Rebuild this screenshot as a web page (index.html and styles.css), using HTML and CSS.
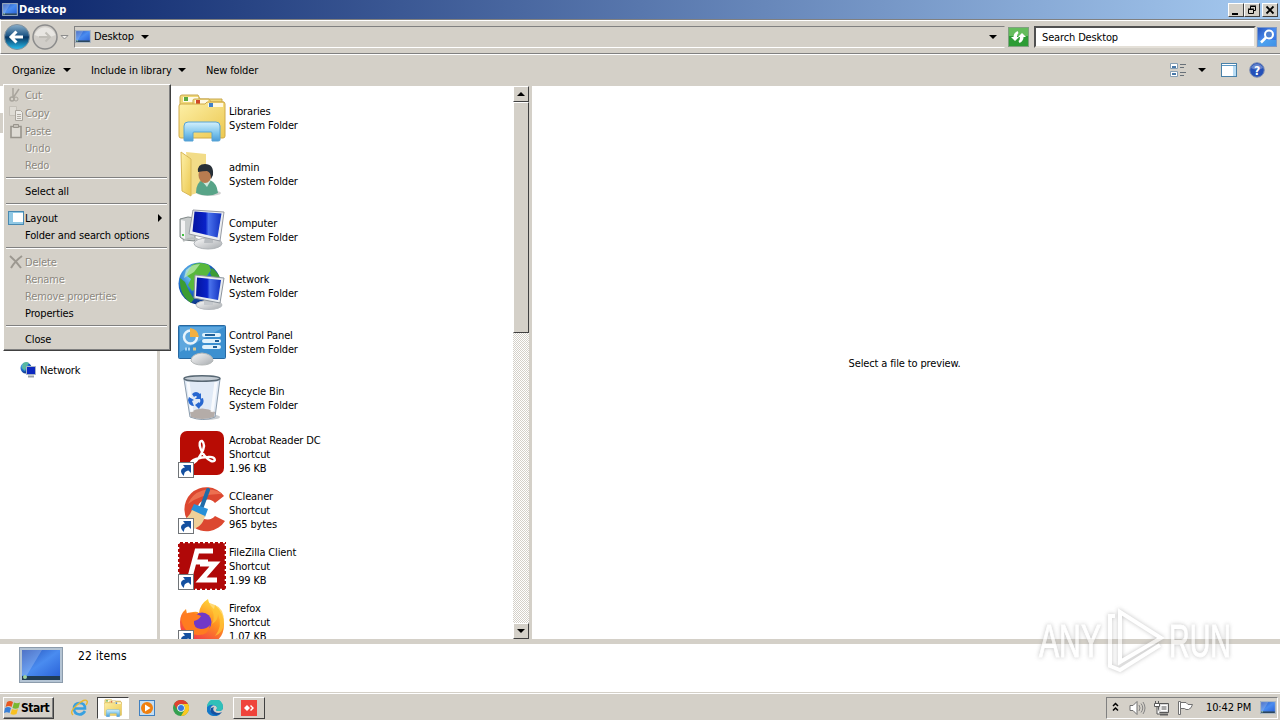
FILE: index.html
```html
<!DOCTYPE html>
<html lang="en">
<head>
    <meta charset="UTF-8">
    <meta name="viewport" content="width=device-width, initial-scale=1.0">
    <title>Desktop</title>
    <link rel="stylesheet" href="styles.css">
</head>
<body>

<!-- shared icons -->
<svg class="defs" width="0" height="0">
  <defs>
    <linearGradient id="blue" x1="0" y1="0" x2="1" y2="1">
      <stop offset="0" stop-color="#2450b8"/><stop offset=".5" stop-color="#4a8cf0"/><stop offset="1" stop-color="#2a62d8"/>
    </linearGradient>
    <linearGradient id="navy" x1="0" y1="0" x2="1" y2="0">
      <stop offset="0" stop-color="#0414a0"/><stop offset=".45" stop-color="#0a22c8"/><stop offset=".55" stop-color="#4a72ec"/><stop offset="1" stop-color="#1030c0"/>
    </linearGradient>
    <linearGradient id="yellow" x1="0" y1="0" x2="1" y2="1">
      <stop offset="0" stop-color="#fdf0a8"/><stop offset="1" stop-color="#ecc850"/>
    </linearGradient>
    <linearGradient id="glass" x1="0" y1="0" x2="0" y2="1">
      <stop offset="0" stop-color="#d4f0fc"/><stop offset=".6" stop-color="#7cc4ec"/><stop offset="1" stop-color="#4c9cd8"/>
    </linearGradient>
    <linearGradient id="silver" x1="0" y1="0" x2="1" y2="1">
      <stop offset="0" stop-color="#fafafa"/><stop offset="1" stop-color="#a8acb0"/>
    </linearGradient>
    <radialGradient id="globe" cx=".35" cy=".3" r=".75">
      <stop offset="0" stop-color="#8ce0f8"/><stop offset=".5" stop-color="#2070d0"/><stop offset="1" stop-color="#082878"/>
    </radialGradient>
    <linearGradient id="back" x1="0" y1="0" x2="0" y2="1">
      <stop offset="0" stop-color="#8ab0cc"/><stop offset=".45" stop-color="#1c5484"/><stop offset=".5" stop-color="#083460"/><stop offset="1" stop-color="#28c0f0"/>
    </linearGradient>
    <linearGradient id="fox" x1=".8" y1="0" x2=".3" y2="1">
      <stop offset="0" stop-color="#ffe040"/><stop offset=".45" stop-color="#ff9020"/><stop offset="1" stop-color="#f02850"/>
    </linearGradient>
  </defs>
  <symbol id="desktop" viewBox="0 0 44 36">
    <rect x="0.5" y="0.5" width="43" height="35" fill="#b4c4d4" stroke="#8c9cac"/>
    <rect x="3" y="3" width="38" height="27" fill="url(#blue)"/>
    <path d="M3 3h20L8 28H3z" fill="#fff" opacity=".2"/>
    <rect x="3" y="29" width="38" height="4" fill="#203c54"/>
    <circle cx="6" cy="30" r="2" fill="#9cd0a0"/>
  </symbol>
  <symbol id="libraries" viewBox="0 0 48 48">
    <path d="M2 8V3q0-2 2-2h16l2 4h22v8H2z" fill="#f0d878" stroke="#c8a850"/>
    <rect x="5" y="3" width="15" height="5" fill="#fffbe8"/><rect x="6" y="3" width="4" height="4" fill="#58a840"/>
    <path d="M15 10V6q0-1 2-1h14l2 3h13v6H15z" fill="#f6e088" stroke="#c8a850"/>
    <rect x="17" y="6" width="13" height="4" fill="#fff8e0"/><rect x="18" y="6" width="4" height="4" fill="#d04828"/>
    <path d="M1 12q0-2 2-2h24l2-2h16q2 0 2 2v32q0 2-2 2H3q-2 0-2-2z" fill="url(#yellow)" stroke="#d0aa48"/>
    <rect x="30" y="9" width="15" height="4" fill="#fff8e0"/><rect x="31" y="9" width="4" height="4" fill="#4080c8"/>
    <path d="M6 32q0-4 4-4h28q4 0 4 4v14q0 1-2 1h-6V39q0-1-1-1H16q-1 0-1 1v8H7q-1 0-1-1z" fill="url(#glass)" stroke="#58a4d4"/>
  </symbol>
  <symbol id="network" viewBox="0 0 48 48">
    <circle cx="21.500" cy="21.500" r="21" fill="url(#globe)"/>
    <path d="M14 3q8-4 17 0l2 5-5 7-7 4-1 7-6 3-4-6 3-6-5-4z" fill="#58b83c"/>
    <path d="M34 6q8 6 9 14l-8-3-3-6zM2 16l5 4 4 9 5 8-3 4Q1 33 2 16z" fill="#3c9c34"/>
    <path d="M8 8q6-6 14-6l-6 8-10 6z" fill="#d8f8d0" opacity=".6"/>
    <ellipse cx="31" cy="43" rx="13" ry="4.500" fill="url(#silver)" stroke="#b8bcc0"/>
    <path d="M26 36h9v7h-9z" fill="#c4c8cc"/>
    <path d="M17 13l29 3-4 25-26-5z" fill="#e8ecf0" stroke="#8c949c"/>
    <path d="M19 15.500l24 2.500-3 20-22-4z" fill="url(#navy)"/>
  </symbol>
  <symbol id="shortcut" viewBox="0 0 16 16">
    <rect x="0.500" y="0.500" width="15" height="15" fill="#fff" stroke="#707478"/>
    <path d="M6 14C1 10 3 6 7 5.500L5 3h8v8l-2.500-2.500C7 9 6 11 6 14z" fill="#1450a0"/>
  </symbol>
</svg>

<div class="titlebar">
  <svg class="title-icon" width="16" height="13"><use href="#desktop"/></svg>
  <span class="title">Desktop</span>
  <div class="window-buttons">
    <button class="win-btn"><svg width="12" height="10"><path d="M2 8h6v2H2z"/></svg></button>
    <button class="win-btn"><svg width="12" height="10"><path d="M4.500 5V1.500h5v4H8M4 1h6M2.500 4.500h5v4h-5zM2 4h6" fill="none" stroke="#000"/></svg></button>
    <button class="win-btn close"><svg width="12" height="10"><path d="M2.500 1.500l7 7M9.500 1.500l-7 7" stroke="#000" stroke-width="1.800"/></svg></button>
  </div>
</div>

<div class="address-row">
  <svg width="60" height="28" viewBox="0 0 60 28">
    <circle cx="14" cy="14" r="12.500" fill="url(#back)" stroke="#80909c"/>
    <path d="M8 14h12M13.500 8.500L8 14l5.500 5.500" fill="none" stroke="#fff" stroke-width="3"/>
    <circle cx="42" cy="14" r="12" fill="#d0cdc8" stroke="#8c8c8c" stroke-width="1.500"/>
    <path d="M31.500 12a11 11 0 0 1 21 0q-10 5-21 0z" fill="#e8e6e2"/>
    <path d="M36 14h11M42.500 9.500L47 14l-4.500 4.500" fill="none" stroke="#c0beb8" stroke-width="2"/>
  </svg>
  <svg class="history" width="9" height="6"><path d="M1 1.500h7L4.500 5z" fill="#f4f2ee" stroke="#8c8c8c"/></svg>
  <div class="address">
    <svg width="16" height="13"><use href="#desktop"/></svg>
    <span class="text">Desktop</span>
    <i class="down"></i>
    <i class="down right"></i>
  </div>
  <svg class="refresh" width="21" height="20" viewBox="0 0 21 20">
    <rect x="0.500" y="0.500" width="20" height="19" fill="#2c9c34" stroke="#80a080"/>
    <rect x="1" y="1" width="19" height="8" fill="#64bc5c"/>
    <path d="M7 14l-4-4h2.500q0-4 4-6l1 2Q9 7 9 10h2zM14 6l4 4h-2.500q0 4-4 6l-1-2q1.500-1 1.500-4h-2z" fill="#fff"/>
  </svg>
  <div class="search"><span class="text">Search Desktop</span></div>
  <svg width="20" height="20" viewBox="0 0 20 20">
    <rect x="0.500" y="0.500" width="19" height="19" fill="url(#blue)" stroke="#7c98c8"/>
    <path d="M1 13h18v6H1z" fill="#50b0f0" opacity=".6"/>
    <circle cx="12" cy="7.500" r="4" fill="#5080d0" stroke="#fff" stroke-width="2"/>
    <path d="M9 10.500L4 15.500" stroke="#fff" stroke-width="2.500"/>
  </svg>
</div>

<div class="toolbar">
  <span class="text organize">Organize</span><i class="down"></i>
  <span class="text include">Include in library</span><i class="down"></i>
  <span class="text newfolder">New folder</span>
  <div class="tools">
    <svg width="17" height="16" viewBox="0 0 17 16">
      <path d="M.5 1.500h7v5h-7zM.5 9.500h7v5h-7z" fill="#fff" stroke="#88a0b4"/>
      <path d="M2 4h4v2H2zM2 11h4v2H2z" fill="#4878a8"/>
      <path d="M10 2.500h6M10 5.500h4M10 10.500h6M10 13.500h4" stroke="#687078"/>
    </svg>
    <i class="down"></i>
    <svg class="preview-icon" width="16" height="14" viewBox="0 0 16 14">
      <rect x="0.500" y="0.500" width="15" height="13" fill="#fff" stroke="#4880a8"/>
      <path d="M1 2.500h14" stroke="#5c98c4"/><path d="M12 3h3v10h-3z" fill="#b8dcf4"/>
    </svg>
    <svg width="16" height="16" viewBox="0 0 16 16">
      <circle cx="8" cy="8" r="7.300" fill="#2450b8" stroke="#8090b4"/>
      <path d="M2 6a6.500 6.500 0 0 1 12 0q-6 3-12 0z" fill="#fff" opacity=".3"/>
      <text x="8" y="12.500" class="help">?</text>
    </svg>
  </div>
</div>

<div class="content">
  <div class="nav-pane">
    <div class="nav-edge"></div>
    <div class="nav-item">
      <svg width="16" height="16" viewBox="0 0 16 16">
        <circle cx="6" cy="6" r="5.500" fill="url(#globe)"/>
        <path d="M3 1q4-2 6 0L6 5 5 9 2 6z" fill="#58b8a0"/>
        <path d="M6.500 4.500h9v8h-9z" fill="#0c28c0" stroke="#a8b4c4"/>
        <path d="M8 14.500h6" stroke="#98a0a8" stroke-width="2"/>
      </svg>
      <span class="text">Network</span>
    </div>
  </div>

  <div class="file-list">
    <div class="file">
      <svg width="48" height="48"><use href="#libraries"/></svg>
      <div class="info"><p>Libraries</p><p>System Folder</p></div>
    </div>
    <div class="file">
      <svg width="48" height="48" viewBox="0 0 48 48">
        <ellipse cx="31" cy="43" rx="12" ry="3" fill="#d0d0d0"/>
        <path d="M8 2l20 2v36l-15 5z" fill="#f2dc88"/>
        <path d="M3 2l10 7v37L4 41z" fill="url(#yellow)" stroke="#d8b858"/>
        <path d="M18 43q0-11 7-13h7q7 3 8 13-10 5-22 0z" fill="#58a488"/>
        <path d="M23 30l6 7 4-7z" fill="#d0e8dc"/>
        <ellipse cx="27" cy="25" rx="6.500" ry="8" fill="#b87c50"/>
        <path d="M20 22q-1-8 7-8 9 0 8 11l-2 4q0-7-4-8-4 0-9 1z" fill="#283038"/>
      </svg>
      <div class="info"><p>admin</p><p>System Folder</p></div>
    </div>
    <div class="file">
      <svg width="48" height="48" viewBox="0 0 48 48">
        <path d="M2 13l8-2 7 1v23l-11-1-4-3z" fill="#c8cccc" stroke="#808888"/>
        <path d="M3 14l4 1v18l-4-2z" fill="#f4f4f4"/><path d="M4 28h2v2H4z" fill="#40c040"/>
        <path d="M5 35q9-5 16-1" fill="none" stroke="#b8bcbc" stroke-width="2"/>
        <ellipse cx="30" cy="37.500" rx="14" ry="5.500" fill="url(#silver)" stroke="#b0b4b8"/>
        <path d="M27 31h8v6h-9z" fill="#b8bcc0"/>
        <path d="M15 4l31 2-4 29-31-7z" fill="#eceef0" stroke="#989ca4"/>
        <path d="M16.500 5.500l27 2-4 24-25-6z" fill="url(#navy)"/>
      </svg>
      <div class="info"><p>Computer</p><p>System Folder</p></div>
    </div>
    <div class="file">
      <svg width="48" height="48"><use href="#network"/></svg>
      <div class="info"><p>Network</p><p>System Folder</p></div>
    </div>
    <div class="file">
      <svg width="48" height="48" viewBox="0 0 48 48">
        <rect x="0.500" y="7.500" width="47" height="33" rx="1" fill="#3c90d0" stroke="#2868a0"/>
        <path d="M2 9h44L2 34z" fill="#74b8e8" opacity=".6"/>
        <circle cx="12.500" cy="19" r="6.500" fill="none" stroke="#e8f4fc" stroke-width="2.500"/>
        <path d="M12 19V10q8 1 9 9z" fill="#f4b040"/>
        <path d="M26 17h15M26 23h15M26 29h15" stroke="#e0f2fc" stroke-width="4" stroke-linecap="round"/>
        <path d="M27 17h10M37 23h4M35 29h4" stroke="#206098" stroke-width="2"/>
        <path d="M7 31h6" stroke="#b0d8f4" stroke-width="3" stroke-dasharray="2 1"/><path d="M15 31h3" stroke="#d8c890" stroke-width="3"/>
        <path d="M13 43q0-7 11-8 11 1 11 8-3 4-11 4t-11-4z" fill="url(#silver)" stroke="#b4b8b8"/>
      </svg>
      <div class="info"><p>Control Panel</p><p>System Folder</p></div>
    </div>
    <div class="file">
      <svg width="48" height="48" viewBox="0 0 48 48">
        <ellipse cx="29" cy="43" rx="13" ry="3" fill="#c8ccd0"/>
        <path d="M6 5h36l-5 38q-12 5-25 0z" fill="#e0eaf6" stroke="#8c9cac"/>
        <path d="M12 38q12-7 25 0l-1 5q-12 4-23 0z" fill="#b4aca8"/>
        <path d="M10 8l4 30M38 8l-4 30" stroke="#fff" stroke-width="3" opacity=".8"/>
        <ellipse cx="24" cy="4.500" rx="18" ry="2.800" fill="#c4ccd4" stroke="#586874" stroke-width="1.500"/>
        <path d="M14 20q4-4 8 0l1-1v6h-6l2-2q-1-2-3 0zM11 23l5 3-2 1 2 5q-5 0-6-6zM22 25l3-1q2 6-3 9l-1 2-4-4 4-3v1q2-1 1-4z" fill="#2868d0"/>
      </svg>
      <div class="info"><p>Recycle Bin</p><p>System Folder</p></div>
    </div>
    <div class="file">
      <div class="icon">
        <svg width="48" height="48" viewBox="0 0 48 48">
          <rect x="2" y="1" width="44" height="44" rx="7" fill="#b80c04"/>
          <path d="M13 34c7-2 17-18 11-23-5-1-2 14 9 20 6 2 5-5-3-4-8 0-18 3-17 7z" fill="none" stroke="#fff" stroke-width="2.400" stroke-linejoin="round"/>
        </svg>
        <svg class="shortcut" width="16" height="16"><use href="#shortcut"/></svg>
      </div>
      <div class="info"><p>Acrobat Reader DC</p><p>Shortcut</p><p>1.96 KB</p></div>
    </div>
    <div class="file">
      <div class="icon">
        <svg width="48" height="48" viewBox="0 0 48 48">
          <path d="M46 10A22 22 0 1 0 47 35L37 30A10 10 0 1 1 37 17z" fill="#dc4830"/>
          <path d="M44 8A22 22 0 0 0 10 18q14-11 34-10z" fill="#ec7050"/>
          <path d="M30 4l-7 19" stroke="#206ca8" stroke-width="4" stroke-linecap="round"/>
          <path d="M16 18l14 5-3 8-14-7z" fill="#2890d8"/>
          <path d="M14 24l13 6q-3 13-17 14L2 36q9-4 12-12z" fill="#f0d098"/>
        </svg>
        <svg class="shortcut" width="16" height="16"><use href="#shortcut"/></svg>
      </div>
      <div class="info"><p>CCleaner</p><p>Shortcut</p><p>965 bytes</p></div>
    </div>
    <div class="file">
      <div class="icon">
        <svg width="48" height="48" viewBox="0 0 48 48">
          <rect width="48" height="48" fill="#b00808"/>
          <rect width="48" height="48" fill="none" stroke="#fff" stroke-width="2.500" stroke-dasharray="2 3"/>
          <path d="M12 35l7-26h16M16 20h14M22 22h15L23 38h16" fill="none" stroke="#fff" stroke-width="5"/>
        </svg>
        <svg class="shortcut" width="16" height="16"><use href="#shortcut"/></svg>
      </div>
      <div class="info"><p>FileZilla Client</p><p>Shortcut</p><p>1.99 KB</p></div>
    </div>
    <div class="file">
      <div class="icon">
        <svg width="48" height="48" viewBox="0 0 48 48">
          <path d="M2 24q0-8 6-13l1 5 6-2q4-1 6 1Q22 6 30 1q1 6 6 10l1-4q9 8 9 19 0 20-22 21Q2 46 2 24z" fill="url(#fox)"/>
          <circle cx="24" cy="24" r="9.500" fill="#7038c8"/>
          <path d="M3 20q6-7 13-5l7 3q-2 4-7 5-1 7 7 8 6 0 9-4-1 10-12 10Q5 36 3 20z" fill="#ff7c20"/>
          <path d="M29 4q10 12 5 22 6-3 6-10 5 12-3 22 9-4 9-14Q46 10 37 7z" fill="#ffc838" opacity=".7"/>
        </svg>
        <svg class="shortcut" width="16" height="16"><use href="#shortcut"/></svg>
      </div>
      <div class="info"><p>Firefox</p><p>Shortcut</p><p>1.07 KB</p></div>
    </div>
  </div>

  <div class="scrollbar">
    <div class="scroll-btn"><i class="down up"></i></div>
    <div class="thumb"></div>
    <div class="scroll-btn bottom"><i class="down"></i></div>
  </div>

  <div class="preview"><span class="text">Select a file to preview.</span></div>
</div>

<div class="details">
  <svg width="44" height="36"><use href="#desktop"/></svg>
  <span class="text">22 items</span>
</div>

<div class="taskbar">
  <button class="start">
    <svg width="17" height="16" viewBox="0 0 17 16">
      <path d="M3 2q3-2 6 0L7.500 7Q5 5 1.500 7z" fill="#e85820"/>
      <path d="M10 2.500q3 1.500 6 0L14.500 8q-3 1.500-6 0z" fill="#78b830"/>
      <path d="M1 8q3-2 6 0l-1.500 5Q3 11.500 0 13z" fill="#3880d8"/>
      <path d="M8 9q3 1.500 6 0l-1.500 5q-3 1.500-6 0z" fill="#f8c020"/>
    </svg>
    <span class="start-text">Start</span>
  </button>
  <div class="task ie">
    <svg width="18" height="18" viewBox="0 0 18 18">
      <path d="M15 12q-2 3.500-5.500 3.500Q4 15 4 9.500 4 4 9.500 4T15 9.500H5" fill="none" stroke="#38a0e0" stroke-width="2.600"/>
      <path d="M3 16Q-1 13 7 6t10-4q1 1-1 4" fill="none" stroke="#e8b830" stroke-width="1.400"/>
    </svg>
  </div>
  <div class="task pressed"><svg width="18" height="18"><use href="#libraries"/></svg></div>
  <div class="task">
    <svg width="16" height="16" viewBox="0 0 16 16">
      <rect x="0.500" y="0.500" width="15" height="15" fill="#c4def4" stroke="#4080c0"/>
      <circle cx="8" cy="8" r="6" fill="#f08010"/><path d="M6 4.500l5.500 3.500L6 11.500z" fill="#fff"/>
    </svg>
  </div>
  <div class="task">
    <svg width="16" height="16" viewBox="0 0 16 16">
      <circle cx="8" cy="8" r="8" fill="#34a050"/>
      <path d="M1 4a8 8 0 0 1 14 0H8a4 4 0 0 0-3.500 6z" fill="#e04030"/>
      <path d="M15 4a8 8 0 0 1-7 12l3.500-6A4 4 0 0 0 8 4z" fill="#fcc820"/>
      <circle cx="8" cy="8" r="3.800" fill="#fff"/><circle cx="8" cy="8" r="3" fill="#3878e0"/>
    </svg>
  </div>
  <div class="task">
    <svg width="16" height="16" viewBox="0 0 16 16">
      <path d="M0 8a8 8 0 0 1 16-1q0 4-4 4-3 0-3-1 2-2 0-4-3-2-5 1-2 5 4 7 3 1 6-1-3 4-8 3-6-1-7-8z" fill="#1478c8"/>
      <path d="M0 7a8 8 0 0 1 16 0q0 4-4 4-3 0-3-1 2-2 0-4Q4 3 0 7z" fill="#30c0b8"/>
      <path d="M4 8q-2 6 5 7 4 0 6-3-4 2-7 0-3-2-1-5z" fill="#1450a0"/>
    </svg>
  </div>
  <div class="task raised">
    <svg width="16" height="16" viewBox="0 0 16 16">
      <rect width="16" height="16" fill="#ef443b"/>
      <path d="M6 5L9 8 6 11 3 8z" fill="#fff"/><path d="M10 5l3 3-3 3-1-1 2-2-2-2z" fill="#fff"/>
    </svg>
  </div>

  <div class="tray">
    <svg width="8" height="12" viewBox="0 0 8 12"><path d="M1 4l2.500-2.500L6 4M1 8.500L3.500 6 6 8.500" fill="none" stroke="#000" stroke-width="1.500"/></svg>
    <svg class="speaker" width="17" height="16" viewBox="0 0 17 16">
      <path d="M1 5.500h3l4-4v13l-4-4H1z" fill="#fff" stroke="#707070"/>
      <path d="M10 5q2 3 0 6M12 3.500q3.500 4.500 0 9M14 2q4 6 0 12" fill="none" stroke="#848484"/>
    </svg>
    <svg class="lan" width="17" height="16" viewBox="0 0 17 16">
      <path d="M6 3.500h9.500v9H5z" fill="#d8d8d8" stroke="#585858"/><path d="M8 5.500h6v5H8z" fill="#a8a8a8" stroke="#fff"/>
      <path d="M7 14.500h8" stroke="#606060" stroke-width="2"/>
      <path d="M1.500 3.500h5v3h-5zM2.500 1v2M5.500 1v2M4 7v7h3" fill="#fff" stroke="#585858"/>
    </svg>
    <svg class="flag" width="17" height="16" viewBox="0 0 17 16">
      <path d="M1.500 1.500h2v13h-2z" fill="#fff" stroke="#707070"/>
      <path d="M3.500 2.500H9l2 2h4.500q-1 4-4 5H9l-1.500-1h-4z" fill="#fff" stroke="#707070"/>
    </svg>
    <span class="text clock">10:42 PM</span>
    <svg width="16" height="13"><use href="#desktop"/></svg>
  </div>
</div>

<!-- Organize menu -->
<div class="menu">
  <div class="item tall disabled">
    <svg width="16" height="16" viewBox="0 0 16 16"><path d="M5 1v9M11 2L5 11" stroke="#a8a49c" stroke-width="1.500"/><circle cx="4" cy="12" r="2" fill="none" stroke="#a8a49c" stroke-width="1.500"/><circle cx="8" cy="12" r="2" fill="none" stroke="#a8a49c"/></svg>
    <span class="text">Cut</span>
  </div>
  <div class="item tall disabled">
    <svg width="16" height="16" viewBox="0 0 16 16"><path d="M1.500 1.500h7v9h-7z" fill="#dedbd4" stroke="#c4c0b8"/><path d="M7.500 5.500h5l2 2v8h-7z" fill="#eceae6" stroke="#a8a49c"/><path d="M9 9.500h4M9 11.500h4M9 13.500h4" stroke="#b0aca4"/></svg>
    <span class="text">Copy</span>
  </div>
  <div class="item tall disabled">
    <svg width="16" height="16" viewBox="0 0 16 16"><path d="M3 3.500h10v11H3z" fill="#dedbd4" stroke="#98948c" stroke-width="1.600"/><path d="M5.500 1.500h5v3h-5z" fill="#c4c0b8" stroke="#98948c"/></svg>
    <span class="text">Paste</span>
  </div>
  <div class="item disabled"><span class="text">Undo</span></div>
  <div class="item disabled"><span class="text">Redo</span></div>
  <div class="sep"></div>
  <div class="item"><span class="text">Select all</span></div>
  <div class="sep"></div>
  <div class="item tall">
    <svg width="16" height="14" viewBox="0 0 16 14"><rect x="0.500" y="0.500" width="15" height="13" fill="#fff" stroke="#4888b0"/><path d="M1 1h4v12H1zM5 11h10v2H5z" fill="#90c8e4"/><path d="M1 1.500h14" stroke="#90c8e4"/></svg>
    <span class="text">Layout</span>
    <i class="submenu"></i>
  </div>
  <div class="item"><span class="text">Folder and search options</span></div>
  <div class="sep"></div>
  <div class="item tall disabled">
    <svg width="16" height="16" viewBox="0 0 16 16"><path d="M2 2q6 5 11 12M14 2Q7 7 3 14" fill="none" stroke="#9c9890" stroke-width="2"/></svg>
    <span class="text">Delete</span>
  </div>
  <div class="item disabled"><span class="text">Rename</span></div>
  <div class="item disabled"><span class="text">Remove properties</span></div>
  <div class="item"><span class="text">Properties</span></div>
  <div class="sep"></div>
  <div class="item"><span class="text">Close</span></div>
</div>

<svg class="watermark" width="210" height="74" viewBox="0 0 210 74">
  <g class="mark-text">
    <text x="3" y="53" textLength="62" lengthAdjust="spacingAndGlyphs">ANY</text>
    <text x="133" y="53" textLength="62" lengthAdjust="spacingAndGlyphs">RUN</text>
  </g>
  <g class="mark-logo">
    <path d="M84 8L125 34 84 58z"/>
    <path d="M79 12h-5v50l10 4 40-25"/>
  </g>
</svg>

</body>
</html>
```
FILE: styles.css
```css
* {
  box-sizing: border-box;
}

body {
  margin: 0;
  width: 1280px;
  height: 720px;
  overflow: hidden;
  display: flex;
  flex-direction: column;
  background-color: #d4d0c8;
  color: black;
  font-family: "DejaVu Sans Condensed", "DejaVu Sans", sans-serif;
  font-size: 11px;
  font-stretch: condensed;
  letter-spacing: -0.14px;
  line-height: 14px;
}

svg {
  display: block;
  flex-shrink: 0;
}

.defs {
  position: absolute;
}

.text {
  white-space: nowrap;
  padding-top: 1px;
}

button {
  background-color: #d4d0c8;
  border: 1px solid;
  border-color: #fff #404040 #404040 #fff;
  padding: 0;
  font-family: inherit;
}

/* small black arrows */
.down {
  width: 0;
  height: 0;
  border: 4px solid transparent;
  border-top-color: black;
  border-bottom: 0;
}

.up {
  transform: rotate(180deg);
}

.titlebar {
  height: 19px;
  display: flex;
  align-items: center;
  padding: 0 2px;
  background: linear-gradient(to right, #0a246a, #a6caf0);
}

.title {
  color: white;
  font-weight: bold;
  letter-spacing: 0.2px;
  margin-left: 1px;
}

.window-buttons {
  display: flex;
  margin-left: auto;
}

.win-btn {
  width: 16px;
  height: 14px;
  display: flex;
  align-items: center;
  justify-content: center;
}

.close {
  margin-left: 2px;
}

.address-row {
  height: 35px;
  display: flex;
  align-items: center;
  padding: 0 1px 0 2px;
  border-top: 1px solid #808080;
  border-bottom: 1px solid #808080;
  box-shadow: inset 0 1px #fff, 0 1px #fff;
  border-left: 1px solid #fff;
}

.history {
  margin-left: -3px;
}

.address {
  width: 931px;
  height: 22px;
  margin-left: 5px;
  display: flex;
  align-items: center;
  border: 1px solid;
  border-color: #808080 #d4d0c8 #fff #808080;
}

.address .text {
  margin: 0 7px 0 3px;
}

.address .right {
  margin-left: auto;
  margin-right: 7px;
}

.refresh {
  margin-left: 3px;
}

.search {
  width: 222px;
  height: 22px;
  margin: 0 1px 0 5px;
  padding: 3px 6px;
  background-color: white;
  border: 2px solid;
  border-color: #505050 #e4e0d8 #e4e0d8 #505050;
  line-height: 13px;
}

.toolbar {
  height: 32px;
  display: flex;
  align-items: center;
  padding: 0 15px 0 12px;
}

.toolbar .text {
  padding-top: 2px;
}

.organize {
  width: 51px;
}

.include {
  width: 87px;
  margin-left: 20px;
}

.newfolder {
  margin-left: 20px;
}

.tools {
  display: flex;
  align-items: center;
  margin-left: auto;
}

.tools .down {
  margin-left: 11px;
}

.preview-icon {
  margin: 0 12px 0 15px;
}

.help {
  font-size: 12px;
  font-weight: bold;
  fill: white;
  text-anchor: middle;
}

.content {
  height: 553px;
  display: flex;
  background-color: white;
}

.nav-pane {
  width: 160px;
  padding-top: 27px;
  border-right: 3px solid #d4d0c8;
}

.nav-edge {
  width: 3px;
  height: 20px;
  background-color: #d4d0c8;
}

.nav-item {
  display: flex;
  align-items: center;
  gap: 4px;
  margin-top: 229px;
  padding-left: 20px;
}

.nav-item .text {
  padding-top: 2px;
}

.file-list {
  width: 353px;
  padding: 4px 0 0 18px;
  overflow: hidden;
}

.file {
  height: 56px;
  display: flex;
  align-items: center;
  gap: 3px;
}

.info {
  padding-top: 2px;
}

.file p {
  margin: 0;
  white-space: nowrap;
}

.icon {
  position: relative;
}

.shortcut {
  position: absolute;
  left: 0;
  bottom: 0;
}

.scrollbar {
  width: 19px;
  display: flex;
  flex-direction: column;
  border-right: 3px solid #d4d0c8;
  background: repeating-conic-gradient(#d4d0c8 0 25%, #fff 0 50%) 0 0 / 2px 2px;
}

.scroll-btn,
.thumb {
  background-color: #d4d0c8;
  border: 1px solid;
  border-color: #fff #404040 #404040 #fff;
}

.scroll-btn {
  height: 16px;
  display: flex;
  align-items: center;
  justify-content: center;
}

.thumb {
  height: 231px;
}

.bottom {
  margin-top: auto;
}

.preview {
  flex: 1;
  display: flex;
  align-items: center;
  justify-content: center;
  padding: 1px 3px 0 0;
}

.details {
  height: 54px;
  display: flex;
  gap: 15px;
  padding: 3px 0 0 19px;
  background-color: white;
  border-top: 5px solid #d4d0c8;
  border-bottom: 1px solid #d4d0c8;
}

.details .text {
  font-size: 12px;
  letter-spacing: 0.2px;
  line-height: 18px;
  padding-top: 0;
}

.taskbar {
  height: 27px;
  display: flex;
  align-items: center;
  padding: 1px 2px 0 3px;
  border-top: 1px solid #fff;
}

.start {
  width: 51px;
  height: 22px;
  display: flex;
  align-items: center;
  box-shadow: inset -1px -1px #808080;
}

.start-text {
  font-size: 12px;
  font-weight: bold;
  letter-spacing: -0.5px;
}

.task {
  width: 32px;
  height: 22px;
  margin-right: 2px;
  display: flex;
  align-items: center;
  justify-content: center;
}

.ie {
  margin-left: 9px;
}

.pressed {
  background-color: white;
  border: 1px solid;
  border-color: #404040 #fff #fff #404040;
}

.raised {
  border: 1px solid;
  border-color: #fff #404040 #404040 #fff;
}

.tray {
  width: 172px;
  height: 22px;
  margin-left: auto;
  padding: 0 1px 0 5px;
  display: flex;
  align-items: center;
  border: 1px solid;
  border-color: #808080 #fff #fff #808080;
}

.speaker {
  margin-left: 9px;
}

.lan,
.flag {
  margin-left: 7px;
}

.clock {
  width: 46px;
  margin: 0 8px 0 12px;
  padding-top: 0;
}

.menu {
  position: absolute;
  left: 3px;
  top: 84px;
  width: 168px;
  height: 267px;
  padding: 1px 3px 1px 2px;
  background-color: #d4d0c8;
  border: 1px solid;
  border-color: #fff #404040 #404040 #fff;
  box-shadow: inset -1px -1px #808080;
}

.item {
  height: 17px;
  display: flex;
  align-items: center;
  padding-left: 2px;
}

.item .text {
  margin-left: auto;
  width: 142px;
  padding-top: 0;
}

.tall {
  height: 18px;
}

.tall .text {
  padding-top: 2px;
}

.disabled {
  color: #8c8880;
  text-shadow: 1px 1px #fff;
}

.submenu {
  width: 0;
  height: 0;
  margin-left: -9px;
  margin-right: 5px;
  border: 4px solid transparent;
  border-left-color: black;
  border-right: 0;
}

.sep {
  height: 2px;
  margin: 3px 0 4px;
  border-top: 1px solid #808080;
  border-bottom: 1px solid #fff;
}

.watermark {
  position: absolute;
  left: 1036px;
  top: 604px;
  opacity: .65;
  filter: drop-shadow(0 0 2px #a0a0a0);
}

.mark-text {
  font-family: "Liberation Sans", sans-serif;
  font-size: 46px;
  letter-spacing: 0;
  fill: white;
  stroke: white;
}

.mark-logo {
  fill: none;
  stroke: white;
  stroke-width: 4;
}
```
